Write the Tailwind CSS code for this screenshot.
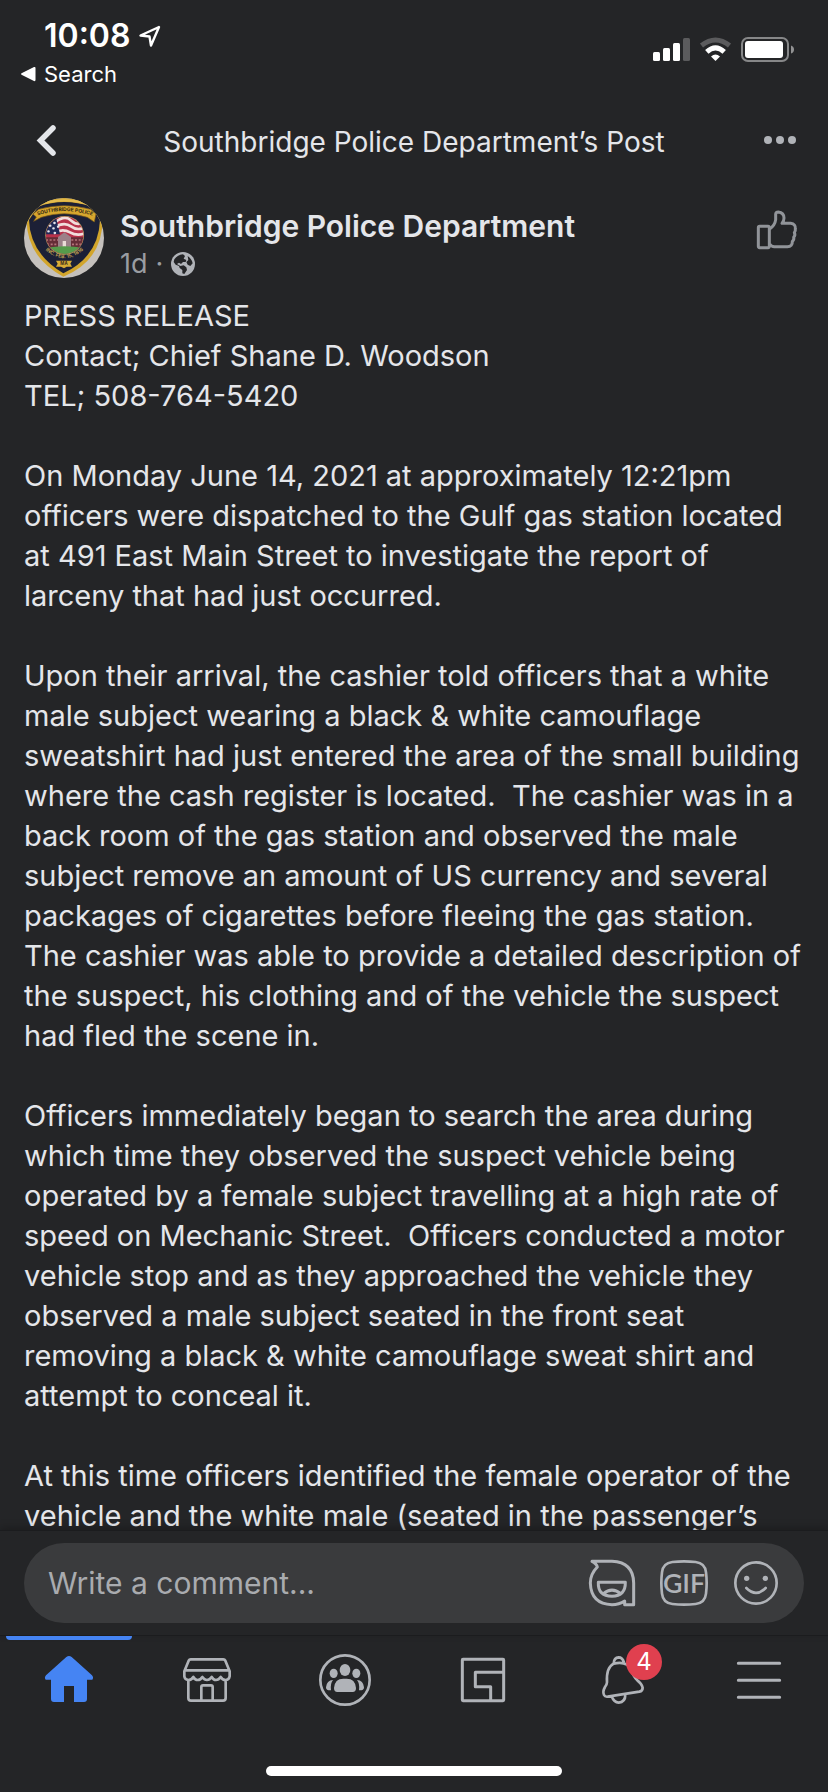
<!DOCTYPE html>
<html lang="en">
<head>
<meta charset="utf-8">
<meta name="viewport" content="width=device-width, initial-scale=1">
<title>Southbridge Police Department’s Post</title>
<script src="https://cdn.jsdelivr.net/npm/@tailwindcss/browser@4"></script>
</head>
<body class="flex h-screen flex-col overflow-hidden bg-[#242527] font-['Inter','Liberation_Sans',sans-serif] text-[#e4e6ea]">

<div class="flex shrink-0 justify-between pt-4 pr-8 pl-5 text-white">
  <div>
    <div class="flex h-10 items-center gap-2 pl-6">
      <span class="text-[32px] font-semibold">10:08</span>
      <svg class="size-6" viewBox="0 0 24 24" fill="none" stroke="currentColor" stroke-width="2.4" stroke-linejoin="round"><path d="M21 3 2.500 11.500 11.500 12.500 13 21.500Z"/></svg>
    </div>
    <a href="#" class="flex h-9 items-center gap-2">
      <svg class="h-4 w-4" viewBox="0 0 16 16" fill="currentColor"><path d="M1.500 7.200 14 1q1.500-.5 1.500 1v12q0 1.500-1.500 1L1.500 8.800q-1-.8 0-1.600Z"/></svg>
      <span class="text-[22px]">Search</span>
    </a>
  </div>
  <svg class="mt-5 h-7 w-36" viewBox="652 36 144 28" fill="currentColor" role="img" aria-label="Signal, Wi-Fi, battery">
    <rect x="653" y="52" width="7" height="9" rx="1.500"/><rect x="663" y="48" width="7" height="13" rx="1.500"/><rect x="673" y="43" width="7" height="18" rx="1.500"/><rect x="683" y="38" width="7" height="23" rx="1.500" opacity=".25"/>
    <path d="M715.500 61 711 56.500Q715.500 52.500 720 56.500Z"/>
    <path d="M706.800 51.800Q715.500 43.800 724.200 51.800" fill="none" stroke="currentColor" stroke-width="5"/>
    <path d="M701.500 45.500Q715.500 34.500 729.500 45.500" fill="none" stroke="currentColor" stroke-width="5" opacity=".25"/>
    <rect x="742" y="38" width="46" height="23" rx="6" fill="none" stroke="currentColor" stroke-width="2" opacity=".45"/>
    <rect x="745" y="41" width="38" height="17" rx="3"/><path d="M791 45.500q3 1 3 4t-3 4Z" opacity=".5"/>
  </svg>
</div>

<header class="flex h-[98px] shrink-0 items-center justify-between px-6">
  <button aria-label="Back" class="w-12 pl-2"><svg class="h-10 w-7" viewBox="0 0 28 40" fill="none" stroke="currentColor" stroke-width="5.500" stroke-linecap="round" stroke-linejoin="miter"><path d="M21 7 8.500 19.500 21 32"/></svg></button>
  <h1 class="pt-0.5 text-[28px]">Southbridge Police Department’s Post</h1>
  <button aria-label="More" class="flex w-12 justify-end pr-2 text-[#b0b3b8]"><svg class="h-8 w-8" viewBox="0 0 32 32" fill="currentColor"><circle cx="4" cy="15" r="4"/><circle cx="16" cy="15" r="4"/><circle cx="28" cy="15" r="4"/></svg></button>
</header>

<main class="min-h-0 flex-1 overflow-hidden px-6 pt-2">
  <div class="flex gap-4">
    <svg class="size-20 shrink-0" viewBox="0 0 240 240" role="img" aria-label="Southbridge Police Department badge">
      <defs>
        <clipPath id="round"><circle cx="120" cy="120" r="120"/></clipPath>
        <clipPath id="seal"><circle cx="122" cy="112" r="56"/></clipPath>
        <path id="arcTop" d="M36 54Q120 24 210 55"/>
        <path id="arcLow" d="M66 157Q120 204 177 157"/>
      </defs>
      <g clip-path="url(#round)">
        <rect width="240" height="240" fill="#c5c1bd"/>
        <path d="M40 20Q120-20 204 20L236 62Q236 188 118 236 6 176 8 62Z" fill="#d2a52c"/>
        <path d="M42 26Q120-2 202 26L228 66Q224 176 118 226 18 166 15 66Z" fill="#1c2036"/>
        <path d="M40 22Q120-8 202 22" fill="none" stroke="#e4bc50" stroke-width="7"/>
        <path d="M27 48 44 34Q120 12 200 34L216 48 211 72 190 58Q120 36 52 58L29 70 37 57Z" fill="#d7a72e" stroke="#7c5b19" stroke-width="2"/>
        <circle cx="122" cy="112" r="58" fill="#bd9d61"/>
        <g clip-path="url(#seal)">
          <rect x="64" y="54" width="118" height="118" fill="#b8314a"/>
          <path d="M95 72q28-22 47-4t43 2M90 88q31-18 51-3t43 2M88 105q28-15 50-2t47 2" fill="none" stroke="#f1dddc" stroke-width="8"/>
          <path d="M60 84 96 58 108 109H62Z" fill="#202a57"/>
          <path d="M78 83h1M91 75h1M88 91h1M102 86h1M73 100h1M92 105h1" stroke="#e4e5ec" stroke-width="7" stroke-linecap="round"/>
          <path d="M64 118h116v31H64Z" fill="#652d37"/>
          <path d="M66 126h36M142 126h36M69 139h32M144 139h30" stroke="#b5737a" stroke-width="5" stroke-dasharray="6 5"/>
          <path d="M102 117 121 103 141 117v32h-39Z" fill="#9c8088"/><path d="M116 129h10v20h-10Z" fill="#eadbd7"/>
          <path d="M62 150q60-11 118 0v26H62Z" fill="#559b4b"/>
        </g>
        <text font-size="15" font-weight="700" fill="#2b2414"><textPath href="#arcTop" startOffset="50%" text-anchor="middle">SOUTHBRIDGE POLICE</textPath></text>
        <text font-size="15" font-weight="600" fill="#c9aa53"><textPath href="#arcLow" startOffset="50%" text-anchor="middle">INC. FEB. 15, 1816</textPath></text>
        <path d="M96 188h48l-5 9 5 9h-16l-8 5-9-5H96l5-9Z" fill="#d9ac35"/>
        <text x="120" y="202" text-anchor="middle" font-size="13" font-weight="700" fill="#39301b">MA</text>
      </g>
    </svg>
    <div class="flex-1">
      <h2 class="mt-2 text-[30px] leading-10 font-semibold">Southbridge Police Department</h2>
      <p class="flex h-9 items-center gap-2 text-[27px] text-[#9a9da2]"><span>1d</span><span>·</span>
        <svg class="size-6 text-[#b0b3b8]" viewBox="0 0 72 72" role="img" aria-label="Public"><circle cx="36" cy="36" r="36" fill="currentColor"/><path d="M10 22Q20 8 36 7L42 12 38 20 46 24 44 30 36 30 30 36 24 32 18 36 28 42 38 40 46 46 48 54 40 66 34 64 34 54 26 48 24 42 14 38 8 30ZM50 12Q62 20 65 34L58 42 50 38 46 30 52 24Z" fill="#242527"/></svg>
      </p>
    </div>
    <button aria-label="Like" class="mt-2 mr-1 size-12 self-start text-[#919499]"><svg viewBox="573 78 144 144" fill="none" stroke="currentColor" stroke-width="9" stroke-linejoin="round"><rect x="592" y="139" width="33" height="64" rx="4"/><path d="M626 147Q642 136 644 119V103Q644 96 652 96 669 98 669 114 669 124 663 130H689Q705 132 703 147 704 153 700 158 704 165 698 172 700 179 694 184 695 199 679 200H640Q631 200 626 192"/></svg></button>
  </div>

  <div class="mt-3.5 text-[29px] leading-10 whitespace-pre-wrap"><p>PRESS RELEASE
Contact; Chief Shane D. Woodson
TEL; 508-764-5420</p><p class="mt-10">On Monday June 14, 2021 at approximately 12:21pm
officers were dispatched to the Gulf gas station located
at 491 East Main Street to investigate the report of
larceny that had just occurred.</p><p class="mt-10">Upon their arrival, the cashier told officers that a white
male subject wearing a black &amp; white camouflage
sweatshirt had just entered the area of the small building
where the cash register is located.  The cashier was in a
back room of the gas station and observed the male
subject remove an amount of US currency and several
packages of cigarettes before fleeing the gas station.
The cashier was able to provide a detailed description of
the suspect, his clothing and of the vehicle the suspect
had fled the scene in.</p><p class="mt-10">Officers immediately began to search the area during
which time they observed the suspect vehicle being
operated by a female subject travelling at a high rate of
speed on Mechanic Street.  Officers conducted a motor
vehicle stop and as they approached the vehicle they
observed a male subject seated in the front seat
removing a black &amp; white camouflage sweat shirt and
attempt to conceal it.</p><p class="mt-10">At this time officers identified the female operator of the
vehicle and the white male (seated in the passenger’s</p></div>
</main>

<form class="shrink-0 border-t border-[#1b1c1e] px-6 py-3 shadow-[0_-2px_8px_rgba(0,0,0,0.25)]">
  <div class="flex h-20 items-center gap-6 rounded-full bg-[#3a3b3d] px-6 text-[#b0b3b8]">
    <input aria-label="Write a comment" placeholder="Write a comment..." class="min-w-0 flex-1 bg-transparent text-[30px] outline-none placeholder:text-[#a9abaf]">
    <button type="button" aria-label="Avatar stickers" class="size-12"><svg viewBox="522 180 144 144" fill="none" stroke="currentColor" stroke-width="9" stroke-linejoin="round"><path d="M534 187H594Q658 190 659 252V317H632V306Q615 317 594 317 531 315 529 252 529 225 550 204Q548 194 534 187Z"/><path d="M553 250H634Q635 291 594 292 551 291 553 250ZM568 284Q594 263 620 284"/></svg></button>
    <button type="button" aria-label="GIF" class="size-12"><svg viewBox="738 180 144 144"><path d="M775 189Q810 185 845 189 873 192 876 220 880 252 876 284 873 312 845 315 810 319 775 315 747 312 744 284 740 252 744 220 747 192 775 189Z" fill="none" stroke="currentColor" stroke-width="8"/><text x="810" y="281" text-anchor="middle" font-family="Lato" font-weight="600" font-size="80" fill="currentColor">GIF</text></svg></button>
    <button type="button" aria-label="Emoji" class="size-12"><svg viewBox="954 180 144 144" fill="none" stroke="currentColor" stroke-width="8" stroke-linecap="round"><circle cx="1026" cy="252" r="62"/><path d="M997 267Q1026 296 1055 267"/><circle cx="998" cy="238" r="8" fill="currentColor" stroke="none"/><circle cx="1054" cy="238" r="8" fill="currentColor" stroke="none"/></svg></button>
  </div>
</form>

<nav class="shrink-0 border-t border-[#1b1c1e] pb-4 text-[#b0b3b8]">
  <div class="grid h-[88px] grid-cols-6">
    <a href="#" aria-label="Home" class="relative flex items-center justify-center text-[#4584f3]"><span class="absolute inset-x-1.5 top-0 h-1 rounded-b-sm bg-[#4584f3]"></span><svg class="size-14" viewBox="123 456 168 168" fill="currentColor"><path d="M199 471Q207 465 215 471L276 526Q282 533 277 539H261V597Q261 606 252 606H222V558H192V606H162Q153 606 153 597V539H137Q132 533 138 526Z"/></svg></a>
    <a href="#" aria-label="Marketplace" class="flex items-center justify-center"><svg class="size-14" viewBox="537 456 168 168" fill="none" stroke="currentColor" stroke-width="8" stroke-linejoin="round"><path d="M572 478H670Q674 478 676 482L689 514V529Q687 540 677 540 667 540 662 531 656 540 648 540 640 540 635 531 629 540 621 540 613 540 607 531 602 540 593 540 585 540 580 531 575 540 565 540 554 538 553 529V514L566 482Q568 478 572 478ZM554 511H688M565 540V594Q565 602 573 602H669Q677 602 677 594V540M604 602V561Q604 556 609 556H633Q638 556 638 561V602"/></svg></a>
    <a href="#" aria-label="Groups" class="flex items-center justify-center"><svg class="size-14" viewBox="951 456 168 168" fill="currentColor"><circle cx="1035" cy="540" r="74" fill="none" stroke="currentColor" stroke-width="8"/><ellipse cx="1035" cy="510" rx="16" ry="18"/><ellipse cx="1001" cy="520" rx="12" ry="14"/><ellipse cx="1069" cy="520" rx="12" ry="14"/><path d="M1002 564Q1004 536 1030 536H1040Q1066 536 1068 564 1068 576 1058 576H1012Q1002 576 1002 564ZM999 540Q990 551 993 571H986Q978 570 978 562 980 541 999 540ZM1071 540Q1080 551 1077 571H1084Q1092 570 1092 562 1090 541 1071 540Z"/></svg></a>
    <a href="#" aria-label="News" class="flex items-center justify-center"><svg class="size-14" viewBox="123 456 168 168" fill="none" stroke="currentColor" stroke-width="9" stroke-linejoin="round"><rect x="145" y="478" width="124" height="124" rx="2"/><path d="M269 517H184V560H230V602"/></svg></a>
    <a href="#" aria-label="Notifications, 4 new" class="flex items-center justify-center"><span class="relative size-14"><svg class="size-14" viewBox="537 456 168 168" fill="none" stroke="currentColor" stroke-width="8" stroke-linejoin="round"><path d="M599 491Q576 503 579 547 579 553 573 561 565 575 570 585 573 591 581 590L676 575Q686 573 686 563 684 552 670 541 657 529 652 510 640 482 599 491ZM599 490Q600 473 614 472 625 472 630 487M593 589Q600 608 614 608 634 606 634 584"/></svg><span class="absolute -top-2 left-[33px] flex size-9 items-center justify-center rounded-full bg-[#e0404f] text-2xl text-white">4</span></span></a>
    <button aria-label="Menu" class="flex items-center justify-center"><svg class="size-14" viewBox="951 456 168 168" stroke="currentColor" stroke-width="9" stroke-linecap="round"><path d="M973 490H1097M973 541H1097M973 592H1097"/></svg></button>
  </div>
  <div class="mx-auto mt-[42px] h-2.5 w-[296px] rounded-full bg-white"></div>
</nav>
</body>
</html>
